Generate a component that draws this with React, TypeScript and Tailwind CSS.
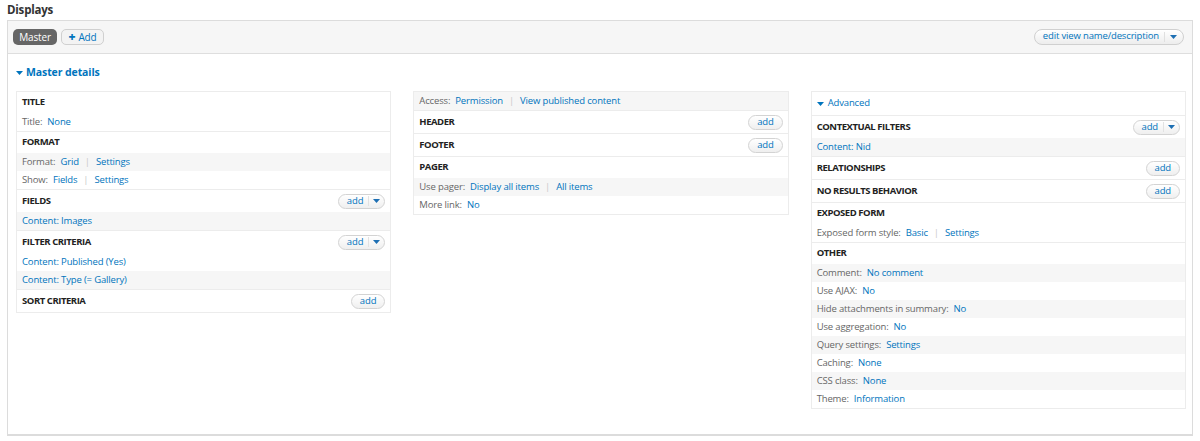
import React from "react";

type Item = { label?: string; links: string[]; shade?: boolean };

const Caret = ({ className = "" }: { className?: string }) => (
  <svg width="7" height="4" viewBox="0 0 7 4" className={className}>
    <path d="M0 0h7L3.5 4z" fill="currentColor" />
  </svg>
);

function AddButton({ dropdown = false }: { dropdown?: boolean }) {
  return (
    <span className="inline-flex h-[15px] items-center rounded-full border border-[#d3d3d3] bg-linear-to-b from-white to-[#efefef] text-[9.5px] leading-none text-[#0074bd]">
      <span className={dropdown ? "pl-[8px] pr-[5px]" : "px-[8px]"}>add</span>
      {dropdown && (
        <span className="flex h-[10px] items-center border-l border-[#e2e2e2] pl-[4px] pr-[4px] text-[#1d6fb3]">
          <Caret />
        </span>
      )}
    </span>
  );
}

function Links({ label, links }: { label?: string; links: string[] }) {
  return (
    <span className="flex items-center whitespace-nowrap">
      {label && <span className="mr-[5px] text-[#666]">{label}:</span>}
      {links.map((l, i) => (
        <React.Fragment key={l}>
          {i > 0 && <span className="mx-[6px] text-[#c8c8c8]">|</span>}
          <span className="text-[#0074bd]">{l}</span>
        </React.Fragment>
      ))}
    </span>
  );
}

function Row({ item }: { item: Item }) {
  return (
    <div
      className={`flex h-[18px] items-center px-[5px] ${
        item.shade ? "bg-[#f6f6f6]" : "bg-white"
      }`}
    >
      <Links label={item.label} links={item.links} />
    </div>
  );
}

function Section({
  title,
  add,
  items = [],
  first = false,
}: {
  title: string;
  add?: "single" | "drop";
  items?: Item[];
  first?: boolean;
}) {
  return (
    <div className={first ? "" : "border-t border-[#ececec]"}>
      <div
        className={`flex items-center justify-between px-[5px] ${
          add ? "h-[22px]" : "h-[21px]"
        }`}
      >
        <span className="text-[9.5px] font-bold uppercase tracking-[-0.45px] text-[#222]">
          {title}
        </span>
        {add && <AddButton dropdown={add === "drop"} />}
      </div>
      {items.map((it, i) => (
        <Row key={i} item={it} />
      ))}
    </div>
  );
}

const Column = ({ children }: { children: React.ReactNode }) => (
  <div className="self-start border border-[#ececec] bg-white">{children}</div>
);

export default function App() {
  return (
    <div
      className="min-h-[441px] bg-white text-[9.5px] tracking-[-0.15px] text-[#333]"
      style={{ fontFamily: '"Open Sans", "DejaVu Sans", sans-serif' }}
    >
      <h2 className="flex h-[20px] items-center pl-[7px] text-[11.5px] font-bold tracking-[-0.2px] text-[#333]">
        Displays
      </h2>

      <div className="mx-[7px] border border-b-2 border-[#dcdcdc]">
        {/* Display tabs */}
        <div className="flex h-[33px] items-center justify-between border-b border-[#dedede] bg-[#f6f6f6] pl-[5px] pr-[8px]">
          <div className="flex items-center gap-[4px]">
            <span className="flex h-[16px] w-[44px] items-center justify-center rounded-[5px] bg-[#666] text-[10px] text-white">
              Master
            </span>
            <span className="flex h-[16px] w-[43px] items-center justify-center rounded-[5px] border border-[#d0d0d0] bg-[#f3f3f3] text-[10px] text-[#0074bd]">
              <span className="mr-[3px] text-[12px] font-extrabold leading-none">+</span>
              Add
            </span>
          </div>
          <span className="mb-[1px] inline-flex h-[16px] items-center whitespace-nowrap rounded-full border border-[#d0d0d0] bg-linear-to-b from-white to-[#ededed] text-[9.5px] text-[#0074bd]">
            <span className="pl-[8px] pr-[5px]">edit view name/description</span>
            <span className="flex h-[10px] items-center border-l border-[#e0e0e0] pl-[5px] pr-[6px] text-[#1d6fb3]">
              <Caret />
            </span>
          </span>
        </div>

        {/* Body */}
        <div className="pb-[25px] pl-[8px] pr-[6px]">
          <div className="flex h-[37px] items-center gap-[3px] text-[10.5px] font-bold tracking-[-0.1px] text-[#0074bd]">
            <Caret className="mt-[1px]" />
            Master details
          </div>

          <div className="grid grid-cols-3 gap-[22px]">
            <Column>
              <Section
                first
                title="Title"
                items={[{ label: "Title", links: ["None"] }]}
              />
              <Section
                title="Format"
                items={[
                  { label: "Format", links: ["Grid", "Settings"], shade: true },
                  { label: "Show", links: ["Fields", "Settings"] },
                ]}
              />
              <Section
                title="Fields"
                add="drop"
                items={[{ links: ["Content: Images"], shade: true }]}
              />
              <Section
                title="Filter criteria"
                add="drop"
                items={[
                  { links: ["Content: Published (Yes)"] },
                  { links: ["Content: Type (= Gallery)"], shade: true },
                ]}
              />
              <Section title="Sort criteria" add="single" />
            </Column>

            <Column>
              <Row
                item={{
                  label: "Access",
                  links: ["Permission", "View published content"],
                  shade: true,
                }}
              />
              <Section title="Header" add="single" />
              <Section title="Footer" add="single" />
              <Section
                title="Pager"
                items={[
                  {
                    label: "Use pager",
                    links: ["Display all items", "All items"],
                    shade: true,
                  },
                  { label: "More link", links: ["No"] },
                ]}
              />
            </Column>

            <Column>
              <div className="flex h-[23px] items-center gap-[4px] px-[5px] text-[#0074bd]">
                <Caret />
                Advanced
              </div>
              <Section
                title="Contextual filters"
                add="drop"
                items={[{ links: ["Content: Nid"], shade: true }]}
              />
              <Section title="Relationships" add="single" />
              <Section title="No results behavior" add="single" />
              <Section
                title="Exposed form"
                items={[
                  { label: "Exposed form style", links: ["Basic", "Settings"] },
                ]}
              />
              <Section
                title="Other"
                items={[
                  { label: "Comment", links: ["No comment"], shade: true },
                  { label: "Use AJAX", links: ["No"] },
                  {
                    label: "Hide attachments in summary",
                    links: ["No"],
                    shade: true,
                  },
                  { label: "Use aggregation", links: ["No"] },
                  { label: "Query settings", links: ["Settings"], shade: true },
                  { label: "Caching", links: ["None"] },
                  { label: "CSS class", links: ["None"], shade: true },
                  { label: "Theme", links: ["Information"] },
                ]}
              />
            </Column>
          </div>
        </div>
      </div>
    </div>
  );
}
